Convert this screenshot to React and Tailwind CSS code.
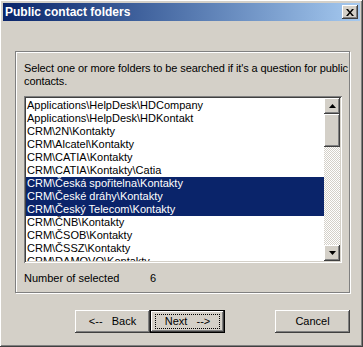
import React from 'react'

const font = { fontFamily: '"Liberation Sans", Arial, sans-serif' }

const items = [
  { label: 'Applications\\HelpDesk\\HDCompany' },
  { label: 'Applications\\HelpDesk\\HDKontakt' },
  { label: 'CRM\\2N\\Kontakty' },
  { label: 'CRM\\Alcatel\\Kontakty' },
  { label: 'CRM\\CATIA\\Kontakty' },
  { label: 'CRM\\CATIA\\Kontakty\\Catia' },
  { label: 'CRM\\Česká spořitelna\\Kontakty', selected: true },
  { label: 'CRM\\České dráhy\\Kontakty', selected: true },
  { label: 'CRM\\Český Telecom\\Kontakty', selected: true },
  { label: 'CRM\\ČNB\\Kontakty' },
  { label: 'CRM\\ČSOB\\Kontakty' },
  { label: 'CRM\\ČSSZ\\Kontakty' },
  { label: 'CRM\\DAMOVO\\Kontakty' },
]

const raised = 'shadow-[inset_-1px_-1px_#404040,inset_1px_1px_#ffffff,inset_-2px_-2px_#808080,inset_2px_2px_#d4d0c8]'

const Arrow = ({ up }) => (
  <svg width="7" height="4" viewBox="0 0 7 4">
    <polygon points={up ? '3.5,0 7,4 0,4' : '0,0 7,0 3.5,4'} fill="#000" />
  </svg>
)

const Button = ({ children, isDefault }) => (
  <div
    className={`w-[75px] h-[23px] bg-[#d4d0c8] flex items-center justify-center text-[11px] text-black ${
      isDefault
        ? 'border border-black shadow-[inset_-1px_-1px_#404040,inset_1px_1px_#ffffff,inset_-2px_-2px_#808080]'
        : raised
    }`}
  >
    {isDefault ? (
      <div className="w-[65px] h-[15px] border border-dotted border-black flex items-center justify-center whitespace-pre">
        {children}
      </div>
    ) : (
      <span className="whitespace-pre">{children}</span>
    )}
  </div>
)

export default function App() {
  return (
    <div
      className={`w-[363px] h-[347px] bg-[#d4d0c8] p-[3px] flex flex-col ${raised}`}
      style={font}
    >
      {/* Title bar */}
      <div className="h-[18px] flex items-center justify-between pl-[2px] pr-[2px] bg-gradient-to-r from-[#0a246a] to-[#a6caf0]">
        <span className="text-white font-bold text-[12px] leading-none">Public contact folders</span>
        <div className={`w-[16px] h-[14px] bg-[#d4d0c8] flex items-center justify-center ${raised}`}>
          <svg width="8" height="7" viewBox="0 0 8 7">
            <path d="M0 0 L2 0 L4 2.5 L6 0 L8 0 L5 3.5 L8 7 L6 7 L4 4.5 L2 7 L0 7 L3 3.5 Z" fill="#000" />
          </svg>
        </div>
      </div>

      {/* Body */}
      <div className="flex flex-col pl-[12px] pt-[30px]">
        <div className="w-[335px] h-[242px] border border-[#808080] shadow-[1px_1px_0_#ffffff,inset_1px_1px_0_#ffffff] pl-[8px] pr-[1px] pt-[10px] flex flex-col">
          <p className="text-[11px] leading-[13px] text-black tracking-[-0.1px]">
            Select one or more folders to be searched if it's a question for public contacts.
          </p>

          {/* Listbox */}
          <div className="mt-[8px] w-[318px] h-[167px] bg-white p-[2px] flex shadow-[inset_1px_1px_#808080,inset_-1px_-1px_#ffffff,inset_2px_2px_#404040,inset_-2px_-2px_#d4d0c8]">
            <div className="flex-1 overflow-hidden pt-[1px]">
              {items.map((it) => (
                <div
                  key={it.label}
                  className={`h-[13px] text-[11px] leading-[13px] pl-[1px] whitespace-nowrap ${
                    it.selected ? 'bg-[#0a246a] text-white' : 'text-black'
                  }`}
                >
                  {it.label}
                </div>
              ))}
            </div>

            {/* Scrollbar */}
            <div className="w-[16px] flex flex-col">
              <div className={`h-[16px] bg-[#d4d0c8] flex items-center justify-center ${raised}`}>
                <Arrow up />
              </div>
              <div className={`h-[33px] bg-[#d4d0c8] ${raised}`} />
              <div className="flex-1 bg-[repeating-conic-gradient(#d4d0c8_0_25%,#ffffff_0_50%)] bg-[length:2px_2px]" />
              <div className={`h-[16px] bg-[#d4d0c8] flex items-center justify-center ${raised}`}>
                <Arrow />
              </div>
            </div>
          </div>

          <div className="mt-[9px] flex text-[11px] leading-[13px] text-black">
            <span className="w-[126px]">Number of selected</span>
            <span>6</span>
          </div>
        </div>

        {/* Buttons */}
        <div className="mt-[17px] flex pl-[60px]">
          <Button>{'<--   Back'}</Button>
          <Button isDefault>{'Next   -->'}</Button>
          <div className="ml-[50px]">
            <Button>Cancel</Button>
          </div>
        </div>
      </div>
    </div>
  )
}
